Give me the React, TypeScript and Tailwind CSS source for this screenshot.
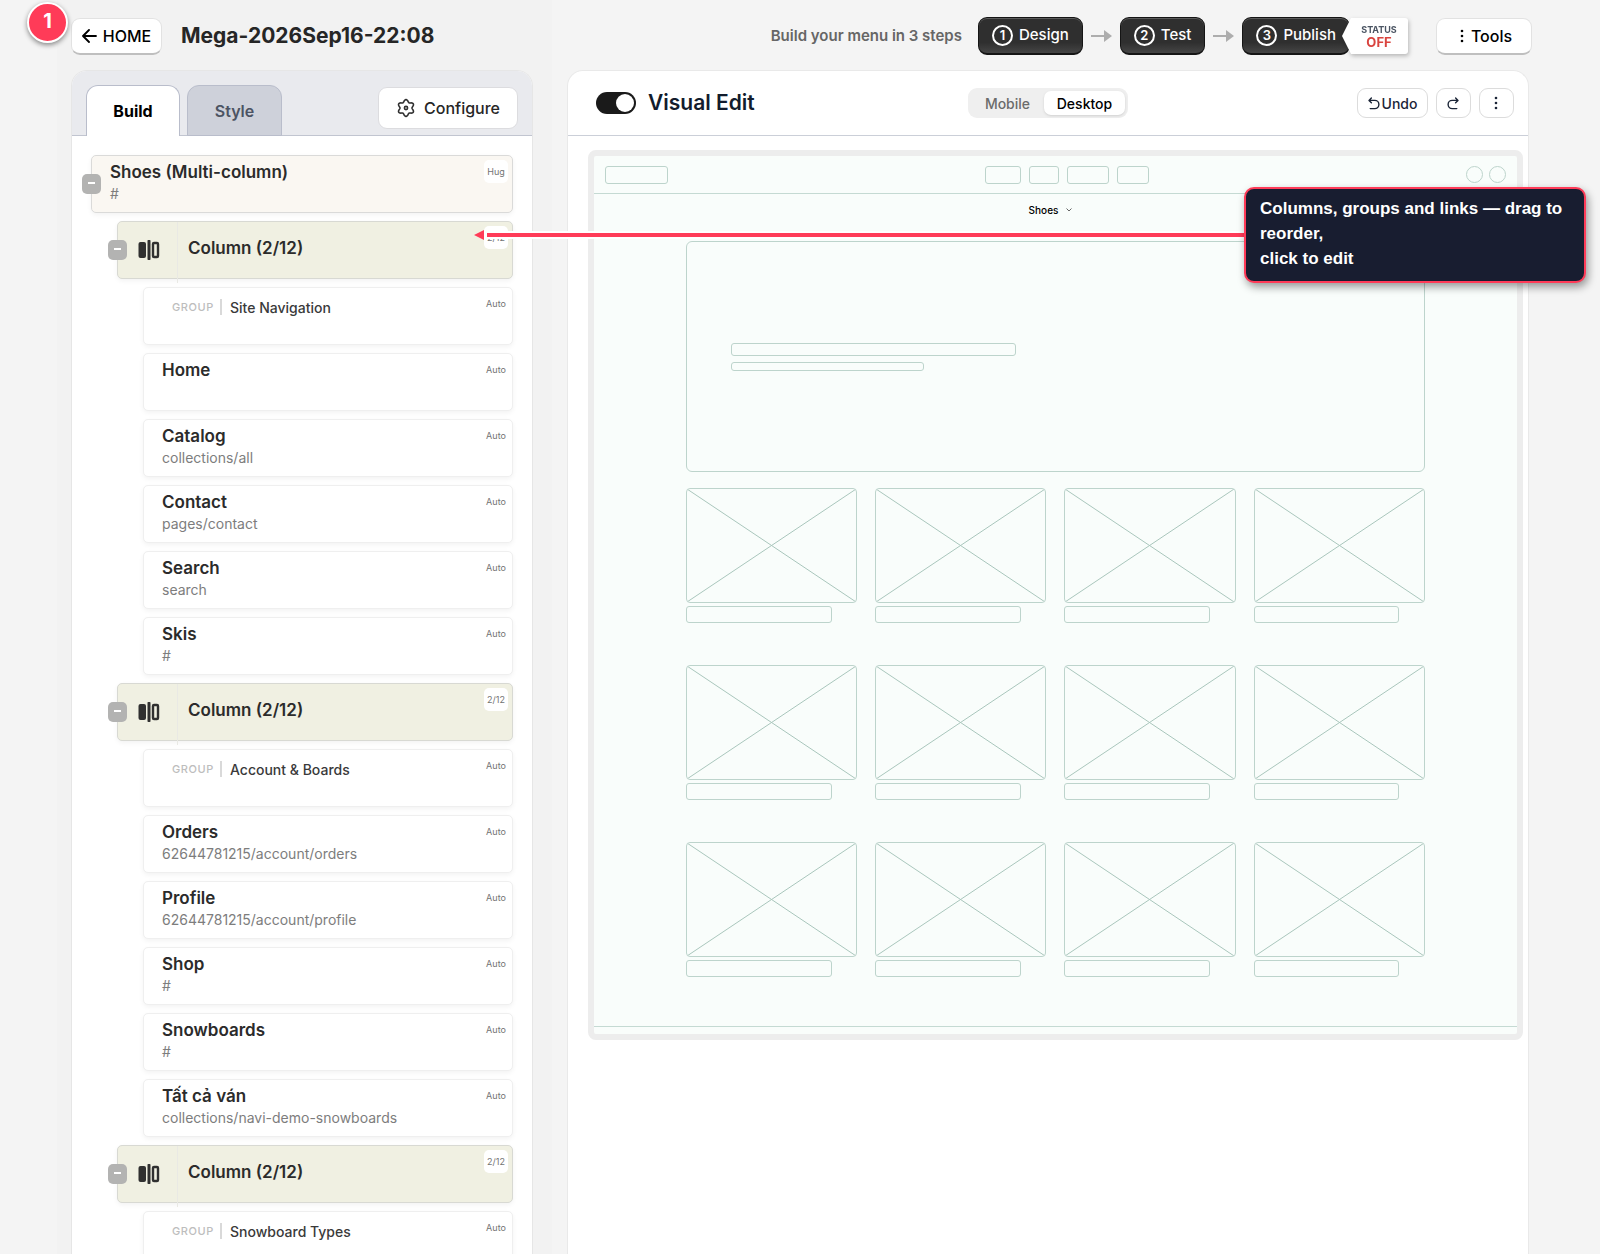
import { Fragment } from "react";
import type { ReactNode } from "react";

type Item = {
  kind: "root" | "column" | "group" | "link";
  title: string;
  url?: string;
  size: string;
};

const items: Item[] = [
  { kind: "root", title: "Shoes (Multi-column)", url: "#", size: "Hug" },
  { kind: "column", title: "Column (2/12)", size: "2/12" },
  { kind: "group", title: "Site Navigation", size: "Auto" },
  { kind: "link", title: "Home", size: "Auto" },
  { kind: "link", title: "Catalog", url: "collections/all", size: "Auto" },
  { kind: "link", title: "Contact", url: "pages/contact", size: "Auto" },
  { kind: "link", title: "Search", url: "search", size: "Auto" },
  { kind: "link", title: "Skis", url: "#", size: "Auto" },
  { kind: "column", title: "Column (2/12)", size: "2/12" },
  { kind: "group", title: "Account & Boards", size: "Auto" },
  { kind: "link", title: "Orders", url: "62644781215/account/orders", size: "Auto" },
  { kind: "link", title: "Profile", url: "62644781215/account/profile", size: "Auto" },
  { kind: "link", title: "Shop", url: "#", size: "Auto" },
  { kind: "link", title: "Snowboards", url: "#", size: "Auto" },
  { kind: "link", title: "Tất cả ván", url: "collections/navi-demo-snowboards", size: "Auto" },
  { kind: "column", title: "Column (2/12)", size: "2/12" },
  { kind: "group", title: "Snowboard Types", size: "Auto" },
];

const indent = {
  root: "border-[#dadad9] bg-[#faf7f2]",
  column: "ml-[26px] border-[#d8d9d3] bg-[#f0f0e2]",
  group: "ml-[52px] border-[#efefef] bg-white",
  link: "ml-[52px] border-[#efefef] bg-white",
};

const ColumnIcon = () => (
  <svg width="22" height="20" viewBox="0 0 22 20" fill="none" aria-hidden="true">
    <rect x="0.5" y="2" width="7.5" height="16" rx="2" fill="#303030" />
    <rect x="9.5" y="0" width="3" height="20" rx="0.8" fill="#303030" />
    <rect x="15" y="3" width="5" height="14" rx="1" stroke="#303030" strokeWidth="2.4" />
  </svg>
);

const DotsIcon = () => (
  <svg width="4" height="14" viewBox="0 0 4 14" fill="currentColor" aria-hidden="true">
    <circle cx="2" cy="2" r="1.3" />
    <circle cx="2" cy="7" r="1.3" />
    <circle cx="2" cy="12" r="1.3" />
  </svg>
);

const StepArrow = () => (
  <svg width="21" height="12" viewBox="0 0 21 12" fill="#adadad" className="shrink-0" aria-hidden="true">
    <path d="M0 5h13V0l8 6-8 6V7H0z" />
  </svg>
);

const UndoIcon = ({ flip = false }: { flip?: boolean }) => (
  <svg
    width="12"
    height="13"
    viewBox="0 0 12 13"
    fill="none"
    stroke="currentColor"
    strokeWidth="1.4"
    strokeLinecap="round"
    strokeLinejoin="round"
    className={flip ? "-scale-x-100" : ""}
    aria-hidden="true"
  >
    <path d="M3.400 1 1 3.400l2.400 2.400M1.200 3.400h5.600a4.100 4.100 0 0 1 0 8.200H2.200" />
  </svg>
);

// six-lobed cog outline
const gearPath =
  Array.from({ length: 72 }, (_, i) => {
    const a = (i * Math.PI) / 36;
    const r = 7.2 + 1.2 * Math.cos(6 * (a - Math.PI / 2));
    return `${i ? "L" : "M"}${(10 + r * Math.cos(a)).toFixed(2)} ${(10 + r * Math.sin(a)).toFixed(2)}`;
  }).join("") + "Z";

const GearIcon = () => (
  <svg width="20" height="20" viewBox="0 0 20 20" fill="none" stroke="#303030" strokeWidth="1.6" strokeLinejoin="round" aria-hidden="true">
    <path d={gearPath} />
    <circle cx="10" cy="10" r="1.6" />
  </svg>
);

const TreeCard = ({ item }: { item: Item }) => {
  const boxed = item.kind === "root" || item.kind === "column";
  return (
    <li className={`relative flex h-[58px] rounded-[5px] border shadow-[0_2px_5px_rgba(0,0,0,0.05)] ${indent[item.kind]}`}>
      {boxed && (
        <button
          aria-label={`Collapse ${item.title}`}
          className="absolute -left-[10px] top-[18px] flex h-5 w-[19px] justify-center rounded-[5px] bg-[#b3b3b2] pt-2"
        >
          <span className="h-[2px] w-[7px] bg-white" />
        </button>
      )}

      {item.kind === "column" && (
        <>
          <div className="-mb-[5px] flex w-[60px] shrink-0 items-center border-r border-[#e9e9e4] pb-[6px] pl-5">
            <ColumnIcon />
          </div>
          <div className="flex flex-1 items-center pb-0.5 pl-[10px] text-[17px] font-semibold text-[#2b2b2b]">{item.title}</div>
        </>
      )}

      {item.kind === "group" && (
        <div className="flex h-[38px] flex-1 items-center pl-7">
          <span className="w-12 text-[11px] font-medium tracking-wider text-[#bdbdbd]">GROUP</span>
          <span className="mr-2 h-4 w-[2px] bg-[#d9d9d9]" />
          <span className="text-[14px] font-medium text-[#3a3a3a]">{item.title}</span>
        </div>
      )}

      {(item.kind === "root" || item.kind === "link") && (
        <div className="flex-1 pl-[18px] pt-[6px] leading-[21px]">
          <div className="text-[17px] font-semibold text-[#2b2b2b]">{item.title}</div>
          <div className="text-[14px] text-[#7d7d7d]">{item.url}</div>
        </div>
      )}

      <span className="absolute right-1 top-1 flex h-[23px] min-w-6 items-center justify-center rounded-[5px] bg-white px-[2px] text-[9px] text-[#737373]">
        {item.size}
      </span>
    </li>
  );
};

const Step = ({ n, children }: { n: number; children: ReactNode }) => (
  <button className="flex h-[38px] items-center gap-[6px] rounded-[9px] border border-b-2 border-[#151515] bg-linear-to-b from-[#2f2f2f] from-70% to-[#454545] px-[13px] text-[15px] font-medium text-white shadow-[inset_0_1px_0_#5a5a5a]">
    <span className="flex size-[21px] items-center justify-center rounded-full border-2 border-white text-[13px] font-semibold">{n}</span>
    {children}
  </button>
);

const Placeholder = () => (
  <div>
    <svg className="h-[115px] w-full rounded-[4px] border border-[#bdd4cc]" viewBox="0 0 100 100" preserveAspectRatio="none" aria-hidden="true">
      <path d="M0 0L100 100M100 0L0 100" stroke="#a9c6bc" strokeWidth="1" vectorEffect="non-scaling-stroke" fill="none" />
    </svg>
    <div className="mt-[3px] h-[17px] w-[85%] rounded-[3px] border border-[#bdd4cc]" />
  </div>
);

const BuildPanel = () => (
  <section className="flex min-h-0 flex-1 flex-col overflow-hidden rounded-t-2xl border border-b-0 border-[#e6e6e6] bg-white">
    <div className="flex h-[65px] shrink-0 items-end justify-between border-b border-[#c1c5d0] bg-[#e9eaee] px-[14px]">
      <div className="-mb-px flex gap-[7px]" role="tablist">
        <button role="tab" aria-selected="true" className="h-[51px] w-[94px] rounded-t-xl border border-b-0 border-[#b9bdcb] bg-white text-[16px] font-bold text-black">
          Build
        </button>
        <button role="tab" aria-selected="false" className="h-[51px] w-[95px] rounded-t-xl border border-[#b9bdcb] bg-[#ced1da] text-[16px] font-semibold text-[#4c5463]">
          Style
        </button>
      </div>
      <button className="mb-[6px] flex h-[42px] w-[140px] items-center justify-center gap-2 rounded-[9px] border border-[#dcdcdf] bg-white text-[16px] font-medium text-[#262626]">
        <GearIcon />
        Configure
      </button>
    </div>
    <ul className="flex flex-col gap-2 px-[19px] pt-[19px]">
      {items.map((item, i) => (
        <TreeCard key={i} item={item} />
      ))}
    </ul>
  </section>
);

const Preview = () => (
  <div className="ml-5 mr-[5px] mt-[14px] rounded-lg border-[6px] border-[#ededed] bg-[#f9fdfb]">
    <div className="grid h-[38px] grid-cols-3 items-center border-b border-[#c5dad3] px-[11px]">
      <div className="h-[18px] w-[63px] rounded-[3px] border border-[#bdd4cc]" />
      <div className="flex justify-center gap-2 pl-6">
        <div className="h-[18px] w-9 rounded-[3px] border border-[#bdd4cc]" />
        <div className="h-[18px] w-[30px] rounded-[3px] border border-[#bdd4cc]" />
        <div className="h-[18px] w-[42px] rounded-[3px] border border-[#bdd4cc]" />
        <div className="h-[18px] w-8 rounded-[3px] border border-[#bdd4cc]" />
      </div>
      <div className="flex justify-end gap-[6px]">
        <div className="size-[17px] rounded-full border border-[#bdd4cc]" />
        <div className="size-[17px] rounded-full border border-[#bdd4cc]" />
      </div>
    </div>
    <div className="flex h-[47px] items-start justify-center gap-2 pr-[10px] pt-2 text-[10px] font-medium leading-4 text-black">
      Shoes
      <svg width="6" height="16" viewBox="0 0 6 16" fill="none" stroke="#666" aria-hidden="true">
        <path d="M0.500 6.500 3 9l2.500-2.500" />
      </svg>
    </div>
    <div className="mx-auto w-4/5">
      <div className="h-[231px] rounded-[6px] border border-[#bdd4cc] px-11 pt-[101px]">
        <div className="h-[13px] w-[285px] rounded-[3px] border border-[#bdd4cc]" />
        <div className="mt-[6px] h-[9px] w-[193px] rounded-[3px] border border-[#bdd4cc]" />
      </div>
      <div className="mt-4 grid grid-cols-4 gap-x-[18px] gap-y-[42px] pb-[49px]">
        {Array.from({ length: 12 }, (_, i) => (
          <Placeholder key={i} />
        ))}
      </div>
    </div>
    <div className="h-2 border-t border-[#c5dad3]" />
  </div>
);

const VisualEdit = () => (
  <section className="min-h-0 flex-1 overflow-hidden rounded-t-2xl border border-b-0 border-[#e9e9e9] bg-white">
    <div className="grid h-[65px] grid-cols-3 items-center border-b border-[#cbcfd8] px-[14px]">
      <label className="flex items-center gap-3 pl-[14px] text-[21px] font-semibold text-[#121c2d]">
        <input type="checkbox" defaultChecked className="peer sr-only" />
        <span className="flex h-[22px] w-10 justify-end rounded-full bg-[#1a1a1a] p-[2px]">
          <span className="size-[18px] rounded-full bg-white" />
        </span>
        Visual Edit
      </label>
      <div className="flex h-[30px] w-[160px] items-center justify-self-center rounded-[9px] bg-[#efefef] p-[3px] text-[14px] font-medium text-[#6b6b6b]">
        <button className="flex-1">Mobile</button>
        <button aria-pressed="true" className="h-6 w-[81px] rounded-[7px] bg-white text-black shadow-sm">
          Desktop
        </button>
      </div>
      <div className="flex justify-end gap-2 text-[#1b2537]">
        <button className="flex h-[30px] w-[71px] items-center justify-center gap-[2px] rounded-[9px] border border-[#dcdcdc] text-[14px] font-medium">
          <UndoIcon />
          Undo
        </button>
        <button aria-label="Redo" className="flex h-[30px] w-[35px] items-center justify-center rounded-[9px] border border-[#dcdcdc]">
          <UndoIcon flip />
        </button>
        <button aria-label="More actions" className="flex h-[30px] w-[35px] items-center justify-center rounded-[9px] border border-[#dcdcdc]">
          <DotsIcon />
        </button>
      </div>
    </div>
    <Preview />
  </section>
);

const steps = ["Design", "Test", "Publish"];

export default function App() {
  return (
    <div className="relative flex h-screen overflow-hidden bg-[#f4f4f4] pl-[57px] pr-[71px] font-['Inter',sans-serif]">
      <aside className="flex w-[495px] shrink-0 flex-col bg-[#f2f2f2] pl-[14px] pr-[19px]">
        <header className="flex h-[70px] shrink-0 items-center gap-[19px] pt-0.5">
          <button className="flex h-[37px] w-[91px] items-center justify-center gap-[6px] rounded-[9px] border border-b-2 border-[#e2e2e2] border-b-[#bfbfbf] bg-white text-[16px] font-medium text-black">
            <svg width="15" height="14" viewBox="0 0 15 14" fill="none" stroke="currentColor" strokeWidth="1.8" strokeLinecap="round" strokeLinejoin="round" aria-hidden="true">
              <path d="M14 7H1.500M7 1 1 7l6 6" />
            </svg>
            HOME
          </button>
          <h1 className="text-[21px] font-bold text-[#262626]">Mega-2026Sep16-22:08</h1>
        </header>
        <BuildPanel />
      </aside>

      <main className="flex min-w-0 flex-1 flex-col pl-[15px]">
        <header className="-mr-[3px] flex h-[70px] shrink-0 items-center justify-end pt-0.5">
          <span className="mr-4 text-[15px] font-semibold text-[#666]">Build your menu in 3 steps</span>
          <div className="flex items-center gap-2">
            {steps.map((step, i) => (
              <Fragment key={step}>
                {i > 0 && <StepArrow />}
                <Step n={i + 1}>{step}</Step>
              </Fragment>
            ))}
          </div>
          <div className="relative -ml-2 flex h-9 w-[66px] flex-col items-center justify-center pl-2 font-bold leading-3 drop-shadow-[1px_2px_2px_rgba(0,0,0,0.25)]">
            <svg className="absolute inset-0" width="66" height="36" viewBox="0 0 66 36" aria-hidden="true">
              <path d="M9 0h54a3 3 0 0 1 3 3v30a3 3 0 0 1-3 3H9L0 18z" fill="#fff" />
            </svg>
            <span className="relative text-[9px] text-[#4b5563]">STATUS</span>
            <span className="relative text-[13px] text-[#d9443f]">OFF</span>
          </div>
          <button className="ml-7 flex h-[37px] w-24 items-center justify-center gap-[7px] rounded-[9px] border border-b-2 border-[#e2e2e2] border-b-[#bfbfbf] bg-white pl-1 text-[16px] font-medium text-black">
            <DotsIcon />
            Tools
          </button>
        </header>
        <VisualEdit />
      </main>

      {/* walkthrough marker and callout float over the editor */}
      <div className="absolute left-[27px] top-[2px] flex size-[41px] items-center justify-center rounded-full border-2 border-white bg-[#ff3b58] pb-1 text-[20px] font-bold text-white shadow-[0_2px_5px_rgba(0,0,0,0.45)]">
        1
      </div>
      <div className="absolute left-[474px] right-[14px] top-[187px] flex items-center">
        <svg width="11" height="10" viewBox="0 0 11 10" aria-hidden="true">
          <path d="M0 5 10 0v10z" fill="#ff3b58" />
        </svg>
        <div className="h-2 flex-1 border-y-2 border-l-2 border-white bg-[#ff3b58]" />
        <p className="w-[342px] rounded-[10px] border-2 border-[#ff3b58] bg-[#181d30] px-[14px] pb-[10px] pt-[7px] font-['Liberation_Sans',sans-serif] text-[17px] font-bold leading-[25px] text-white shadow-[2px_4px_8px_rgba(0,0,0,0.4)]">
          Columns, groups and links — drag to reorder,
          <br />
          click to edit
        </p>
      </div>
    </div>
  );
}
